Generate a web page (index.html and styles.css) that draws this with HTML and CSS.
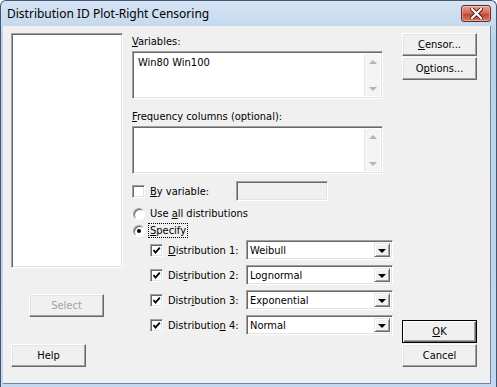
FILE: index.html
```html
<!DOCTYPE html>
<html lang="en">
<head>
  <meta charset="UTF-8">
  <title>Distribution ID Plot-Right Censoring</title>
  <link rel="stylesheet" href="styles.css">
</head>
<body>
  <div class="window">
    <div class="titlebar">
      <span class="title">Distribution ID Plot-Right Censoring</span>
      <span class="close">
        <svg width="13" height="11" viewBox="0 0 13 11">
          <path d="M2 1 L11 10 M11 1 L2 10" stroke="#4a1410" stroke-width="4" stroke-linecap="square"/>
          <path d="M2 1 L11 10 M11 1 L2 10" stroke="#fff" stroke-width="2.2" stroke-linecap="square"/>
        </svg>
      </span>
    </div>

    <div class="client">
      <div class="col-left">
        <div class="listbox sunken"></div>
        <button class="btn btn-select" disabled>Select</button>
        <button class="btn btn-help">Help</button>
      </div>

      <div class="col-main">
        <div class="label"><u>V</u>ariables:</div>
        <div class="textbox sunken">
          <div class="textbox-text">Win80 Win100</div>
          <div class="vscroll"><span class="arr up"></span><span class="arr down"></span></div>
        </div>

        <div class="label label-freq"><u>F</u>requency columns (optional):</div>
        <div class="textbox sunken">
          <div class="textbox-text"></div>
          <div class="vscroll"><span class="arr up"></span><span class="arr down"></span></div>
        </div>

        <div class="row row-by">
          <span class="check"></span>
          <span class="row-label"><u>B</u>y variable:</span>
          <span class="field sunken"></span>
        </div>

        <div class="row radio-row radio-first">
          <span class="radio"></span>
          <span class="row-label">Use <u>a</u>ll distributions</span>
        </div>
        <div class="row radio-row">
          <span class="radio on"></span>
          <span class="row-label focus"><u>S</u>pecify</span>
        </div>

        <div class="dist-row">
          <span class="check checked"></span>
          <span class="dist-label"><u>D</u>istribution 1:</span>
          <div class="combo sunken"><span class="combo-text">Weibull</span><span class="combo-btn"></span></div>
        </div>
        <div class="dist-row">
          <span class="check checked"></span>
          <span class="dist-label">Dis<u>t</u>ribution 2:</span>
          <div class="combo sunken"><span class="combo-text">Lognormal</span><span class="combo-btn"></span></div>
        </div>
        <div class="dist-row">
          <span class="check checked"></span>
          <span class="dist-label">Distr<u>i</u>bution 3:</span>
          <div class="combo sunken"><span class="combo-text">Exponential</span><span class="combo-btn"></span></div>
        </div>
        <div class="dist-row">
          <span class="check checked"></span>
          <span class="dist-label">Distributio<u>n</u> 4:</span>
          <div class="combo sunken"><span class="combo-text">Normal</span><span class="combo-btn"></span></div>
        </div>
      </div>

      <div class="col-right">
        <button class="btn"><u>C</u>ensor...</button>
        <button class="btn btn-gap">O<u>p</u>tions...</button>
        <button class="btn btn-ok"><u>O</u>K</button>
        <button class="btn btn-gap">Cancel</button>
      </div>
    </div>
  </div>
</body>
</html>
```

FILE: styles.css
```css
* {
  box-sizing: border-box;
}
body {
  margin: 0;
  background: #fff;
  font-family: "DejaVu Sans Condensed", "DejaVu Sans", sans-serif;
  font-stretch: condensed;
  font-size: 11px;
  color: #000;
}
u {
  text-decoration: underline;
  text-underline-offset: 1px;
}

/* window frame */
.window {
  width: 497px;
  height: 387px;
  border: 1px solid #44576e;
  border-bottom: none;
  border-radius: 6px 6px 0 0;
  padding: 0 5px 2px 2px;
  background: linear-gradient(#d5e4f4, #bcd2ea 40px, #c3d7ee);
}
.titlebar {
  height: 25px;
  display: flex;
  align-items: flex-start;
  justify-content: space-between;
}
.title {
  font-family: "Noto Sans", "DejaVu Sans", sans-serif;
  font-stretch: normal;
  font-size: 12px;
  line-height: 16px;
  padding: 5px 0 0 4px;
}
.close {
  width: 30px;
  height: 17px;
  margin-top: 4px;
  border: 1px solid #6a2a24;
  border-radius: 3px;
  background: linear-gradient(#e8a493, #d0634d 50%, #c0402a 51%, #d77c63);
  display: flex;
  align-items: center;
  justify-content: center;
  box-shadow: inset 0 0 0 1px rgba(255, 255, 255, 0.35);
}

.client {
  height: 358px;
  background: #f0f0f0;
  border-right: 1px solid #6d86a3;
  border-bottom: 1px solid #6d86a3;
  padding: 7px 0 16px 8px;
  display: flex;
}

/* 3d borders */
.sunken {
  background: #fff;
  border: 1px solid;
  border-color: #a0a0a0 #fff #fff #a0a0a0;
  box-shadow: inset 1px 1px 0 #696969, inset -1px -1px 0 #e3e3e3;
}
.btn {
  display: block;
  width: 75px;
  height: 23px;
  padding: 0;
  font: inherit;
  color: #000;
  background: #f0f0f0;
  border: 1px solid;
  border-color: #fff #696969 #696969 #fff;
  box-shadow: inset -1px -1px 0 #a0a0a0, inset 1px 1px 0 #e3e3e3;
}
.btn:disabled {
  color: #a0a0a0;
}
.btn-ok {
  margin-top: auto;
  border-color: #000;
  box-shadow: inset 1px 1px 0 #fff, inset -1px -1px 0 #696969, inset -2px -2px 0 #a0a0a0;
}
.btn-gap {
  margin-top: 1px;
}

/* columns */
.col-left {
  width: 112px;
  display: flex;
  flex-direction: column;
}
.listbox {
  height: 236px;
}
.btn-select {
  margin: 26px 0 0 18px;
}
.btn-help {
  margin-top: 27px;
}
.col-main {
  width: 261px;
  margin-left: 9px;
}
.col-right {
  width: 75px;
  margin-left: 9px;
  display: flex;
  flex-direction: column;
}

.label {
  line-height: 13px;
  padding-top: 2px;
  margin-bottom: 3px;
}
.label-freq {
  margin-top: 9px;
}
.textbox {
  width: 251px;
  height: 48px;
  display: flex;
  padding: 2px;
}
.textbox-text {
  flex: 1;
  padding: 2px 0 0 3px;
  line-height: 13px;
}
.vscroll {
  width: 16px;
  background: #f4f4f4;
  border-left: 1px solid #e8e8e8;
  display: flex;
  flex-direction: column;
  justify-content: space-between;
  align-items: center;
  padding: 6px 0 5px;
}
.arr {
  width: 0;
  height: 0;
  border-left: 4px solid transparent;
  border-right: 4px solid transparent;
}
.arr.up {
  border-bottom: 4px solid #b4b4b4;
}
.arr.down {
  border-top: 4px solid #b4b4b4;
}

/* checkbox / radio rows */
.row {
  display: flex;
  align-items: center;
}
.row-by {
  height: 20px;
  margin-top: 7px;
}
.row-label {
  line-height: 13px;
}
.check {
  width: 13px;
  height: 13px;
  flex: none;
  margin-right: 5px;
  background: #fff;
  border: 1px solid;
  border-color: #a0a0a0 #fff #fff #a0a0a0;
  box-shadow: inset 1px 1px 0 #696969, inset -1px -1px 0 #e3e3e3;
}
.check.checked {
  background: #fff url("data:image/svg+xml,%3Csvg xmlns='http://www.w3.org/2000/svg' width='11' height='11'%3E%3Cpath d='M2.5 5 L4.5 7.5 L8.8 2.6' fill='none' stroke='%23000' stroke-width='1.8'/%3E%3C/svg%3E") no-repeat 0 0;
}
.field {
  width: 92px;
  height: 20px;
  margin-left: auto;
  margin-right: 65px;
  background: #f0f0f0;
}
.radio-row {
  height: 17px;
}
.radio-first {
  margin-top: 4px;
}
.radio {
  width: 12px;
  height: 12px;
  flex: none;
  margin: 0 5px 0 1px;
  border-radius: 50%;
  background: #fff;
  border: 1px solid;
  border-color: #a0a0a0 #fff #fff #a0a0a0;
  box-shadow: inset 1px 1px 0 #696969;
  display: flex;
  align-items: center;
  justify-content: center;
}
.radio.on::after {
  content: "";
  width: 4px;
  height: 4px;
  border-radius: 50%;
  background: #000;
}
.focus {
  margin-left: -2px;
  padding: 0 1px;
  border: 1px dotted #000;
}

.dist-row {
  height: 20px;
  margin-top: 5px;
  padding-left: 18px;
  display: flex;
  align-items: center;
}
.radio-row + .dist-row {
  margin-top: 1px;
}
.dist-label {
  width: 78px;
}
.combo {
  width: 147px;
  height: 20px;
  display: flex;
  padding: 2px;
}
.combo-text {
  flex: 1;
  padding-left: 1px;
  line-height: 16px;
}
.combo-btn {
  width: 16px;
  background: #f0f0f0;
  border: 1px solid;
  border-color: #e3e3e3 #696969 #696969 #e3e3e3;
  box-shadow: inset 1px 1px 0 #fff, inset -1px -1px 0 #a0a0a0;
  display: flex;
  align-items: center;
  justify-content: center;
}
.combo-btn::after {
  content: "";
  border-left: 4px solid transparent;
  border-right: 4px solid transparent;
  border-top: 4px solid #000;
  margin-top: 1px;
}
```
